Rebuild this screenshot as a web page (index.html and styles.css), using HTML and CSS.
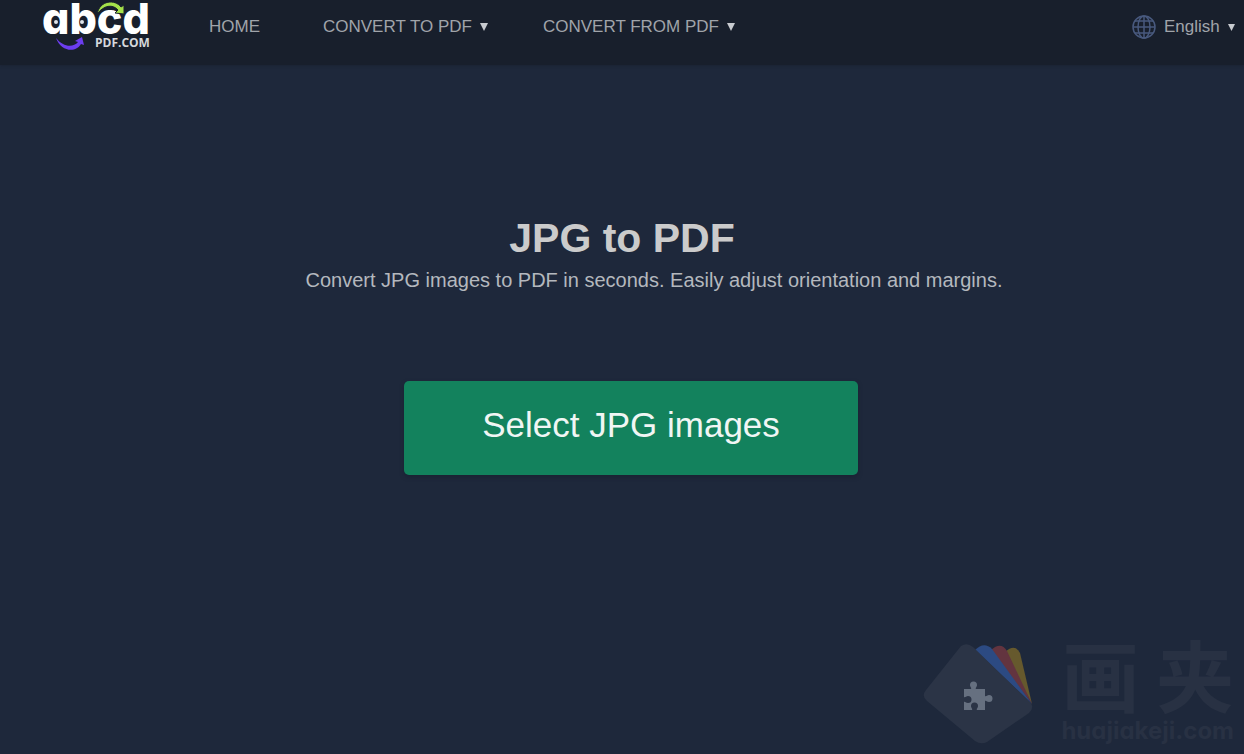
FILE: index.html
```
<!DOCTYPE html>
<html lang="en">
<head>
    <meta charset="UTF-8">
    <meta name="viewport" content="width=device-width, initial-scale=1.0">
    <title>JPG to PDF</title>
    <link rel="stylesheet" href="styles.css">
</head>
<body>

<header class="navbar">
    <a class="logo" href="#">
        <svg width="116" height="54" viewBox="0 0 116 54">
            <text class="logo-name" x="0" y="34">abcd</text>
            <text class="logo-domain" x="53" y="47">PDF.COM</text>
            <!-- eyes -->
            <circle cx="14" cy="22" r="2" fill="#dfe4ea"/>
            <circle cx="40" cy="22" r="2" fill="#dfe4ea"/>
            <!-- arrows -->
            <path d="M55 14 C58 0 73 -1 79 7 L82 5 L82 14 L73 13 L76 10 C71 4 62 5 55 14Z" fill="#a5e14a" stroke="#181f2c" stroke-width="1"/>
            <path d="M14 38 C19 52 34 53 39 44 L42 45 L40 37 L33 41 L36 42 C31 48 21 47 14 38Z" fill="#6c3df0"/>
        </svg>
    </a>
    <nav class="menu">
        <a class="menu-item" href="#">HOME</a>
        <button class="menu-item" type="button">CONVERT TO PDF
            <svg class="caret" width="8" height="8" viewBox="0 0 8 8"><path d="M0 0h8L4 8z"/></svg>
        </button>
        <button class="menu-item" type="button">CONVERT FROM PDF
            <svg class="caret" width="8" height="8" viewBox="0 0 8 8"><path d="M0 0h8L4 8z"/></svg>
        </button>
    </nav>
    <div class="language">
        <label for="language" aria-label="Language">
            <svg class="globe" width="24" height="24" viewBox="0 0 24 24">
                <circle cx="12" cy="12" r="11"/>
                <ellipse cx="12" cy="12" rx="6" ry="11"/>
                <path d="M12 1v22M1 12h22M3 6h18M3 18h18"/>
            </svg>
        </label>
        <select id="language" name="language">
            <option value="en">English</option>
        </select>
        <svg class="caret" width="7" height="7" viewBox="0 0 8 8"><path d="M0 0h8L4 8z"/></svg>
    </div>
</header>

<main class="tool">
    <h1>JPG to PDF</h1>
    <p class="description">Convert JPG images to PDF in seconds. Easily adjust orientation and margins.</p>
    <div class="actions">
        <button class="select-button" type="button">Select JPG images</button>
    </div>
</main>

<!-- Watermark in the bottom corner -->
<div class="watermark">
    <svg width="110" height="102" viewBox="0 0 110 102">
        <path d="M82 9 Q92 0 97 10 L109 61Z" fill="#66592d"/>
        <path d="M68 7 Q78 -2 84 8 L109 61Z" fill="#63343f"/>
        <path d="M52 7 Q61 -2 69 6 L109 61Z" fill="#2c4a82"/>
        <path d="M38 3 Q44 -1 50 4 L107 59 Q112 64 106 70 L64 99 Q58 102 52 98 L4 58 Q-2 53 3 47Z" fill="#2b3446"/>
        <path d="M41 46h7c1-1-1-2-1-4a3.5 3.5 0 0 1 7 0c0 2-2 3-1 4h9v7c1 1 2-1 4-1a3.5 3.5 0 0 1 0 7c-2 0-3-2-4-1v9h-8c-1-1 1-2 1-4a3.5 3.5 0 0 0-7 0c0 2 2 3 1 4h-8v-8c1-1 2 1 4 1a3.5 3.5 0 0 0 0-7c-2 0-3 2-4 1z" fill="#667080"/>
    </svg>
    <div class="watermark-text">
        <div class="watermark-name"><span>画</span><span>夹</span></div>
        <div class="watermark-site">huajiakeji.com</div>
    </div>
</div>

</body>
</html>
```
FILE: styles.css
```
* {
    box-sizing: border-box;
}

body {
    margin: 0;
    min-height: 100vh;
    position: relative;
    background-color: #1e283b;
    color: #c4c7cb;
    font-family: "Liberation Sans", Arial, sans-serif;
}

button, select {
    font-family: inherit;
    border: none;
    cursor: pointer;
}

/* Top bar */
.navbar {
    display: flex;
    align-items: center;
    padding: 0 9px 11px 42px;
    background-color: #181f2c;
    box-shadow: 0 1px 2px #1b2434;
}

.logo {
    display: block;
    height: 54px;
    margin-right: 51px;
}

.logo-name {
    font-family: Inter, sans-serif;
    font-size: 43px;
    font-weight: 800;
    font-feature-settings: "cv11";
    fill: #fff;
}

.logo-domain {
    font-family: "Open Sans", sans-serif;
    font-size: 12px;
    font-weight: 700;
    fill: #d5d8dc;
}

.menu {
    display: flex;
    gap: 55px;
    flex: 1;
}

.menu-item {
    display: flex;
    align-items: center;
    gap: 8px;
    padding: 0;
    background: none;
    color: #a0a4aa;
    font-size: 17px;
    line-height: 20px;
    text-decoration: none;
    white-space: nowrap;
}

.menu-item:first-child {
    margin-right: 8px;
}

.caret {
    fill: #c8cbd0;
}

.language {
    display: flex;
    align-items: center;
    gap: 8px;
}

.language label {
    display: flex;
}

.language select {
    appearance: none;
    padding: 0;
    background: none;
    color: #a0a4aa;
    font-size: 17px;
    line-height: 20px;
}

.globe {
    fill: none;
    stroke: #48597e;
    stroke-width: 1.5;
}

/* Main area */
.tool {
    display: flex;
    flex-direction: column;
    align-items: center;
    padding-top: 148px;
    text-align: center;
}

h1 {
    margin: 0;
    color: #cbcbcb;
    font-size: 41px;
    line-height: 50px;
}

.description {
    margin: 3px 0 0;
    padding-left: 64px;
    color: #b4b8be;
    font-size: 20px;
    line-height: 28px;
}

.actions {
    margin-top: 87px;
    padding-left: 18px;
}

.select-button {
    padding: 24px 78px 30px;
    border-radius: 5px;
    background-color: #13825d;
    color: #f0f6f4;
    font-size: 35px;
    line-height: 40px;
    box-shadow: 0 2px 4px #1a2233;
}

/* Watermark */
.watermark {
    position: absolute;
    right: 10px;
    bottom: 9px;
    display: flex;
    align-items: flex-end;
    gap: 28px;
    pointer-events: none;
    color: #283143;
}

.watermark-name {
    display: flex;
    justify-content: space-between;
    font-family: "Noto Sans CJK SC", sans-serif;
    font-size: 78px;
    font-weight: 700;
    line-height: 88px;
}

.watermark-site {
    font-family: Inter, sans-serif;
    font-size: 24px;
    font-weight: 700;
    font-feature-settings: "cv11";
    line-height: 28px;
}
```
